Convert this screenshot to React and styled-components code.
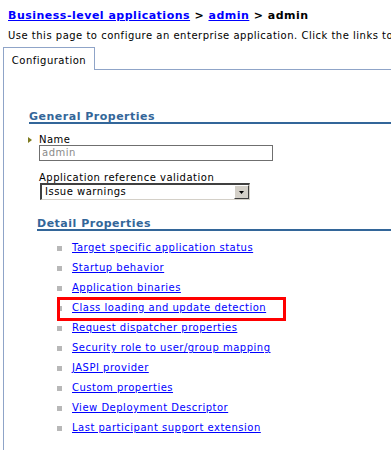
import React from "react";
import styled, { createGlobalStyle } from "styled-components";

const GlobalStyle = createGlobalStyle`
  html, body {
    margin: 0;
    padding: 0;
    background: #ffffff;
  }
  body {
    font-family: "DejaVu Sans", Verdana, sans-serif;
    font-size: 10px;
    letter-spacing: 0.5px;
    color: #000000;
    overflow: hidden;
  }
`;

const Page = styled.div`
  width: 391px;
  height: 450px;
  padding-top: 10px;
  box-sizing: border-box;
  overflow: hidden;
`;

const Breadcrumb = styled.div`
  padding-left: 8px;
  font-size: 11px;
  font-weight: bold;
  line-height: 12px;
  white-space: nowrap;
`;

const CrumbLink = styled.a`
  color: #0000ff;
  text-decoration: underline;
`;

const Description = styled.p`
  margin: 8px 0 0 8px;
  line-height: 12px;
  white-space: nowrap;
  overflow: hidden;
`;

const TabBar = styled.div`
  display: flex;
  margin: 5px 0 0 3px;
  height: 23px;
`;

const Tab = styled.div`
  width: 92px;
  border: 1px solid #8fa4c8;
  border-bottom: none;
  padding-top: 7px;
  box-sizing: border-box;
  text-align: center;
  line-height: 12px;
`;

const TabFiller = styled.div`
  flex: 1;
  border-bottom: 1px solid #8fa4c8;
`;

const Panel = styled.div`
  margin-left: 3px;
  border-left: 1px solid #8fa4c8;
  height: 400px;
  padding-top: 41px;
`;

const SectionTitle = styled.div`
  margin: ${(props) => props.top}px 0 0 ${(props) => props.indent}px;
  border-bottom: 2px solid #336699;
  color: #336699;
  font-size: 11px;
  font-weight: bold;
  line-height: 11px;
`;

const Field = styled.div`
  display: flex;
  flex-direction: column;
  align-items: flex-start;
  margin-left: 35px;
  margin-top: ${(props) => props.top}px;
`;

const Label = styled.label`
  position: relative;
  line-height: 11px;
`;

const Required = styled.svg`
  position: absolute;
  left: -11px;
  top: 3px;
`;

const TextBox = styled.div`
  width: 234px;
  height: 16px;
  border: 1px solid #6f6f6f;
  box-sizing: border-box;
  padding-left: 2px;
  color: #8a8a8a;
  line-height: 14px;
`;

const Select = styled.div`
  display: flex;
  align-items: stretch;
  margin-left: 1px;
  width: 210px;
  height: 17px;
  box-sizing: border-box;
  border-top: 2px solid #404040;
  border-left: 2px solid #404040;
  border-bottom: 1px solid #d4d0c8;
  border-right: 1px solid #d4d0c8;
  background: #ffffff;
`;

const SelectValue = styled.div`
  flex: 1;
  padding-left: 3px;
  line-height: 13px;
`;

const SelectButton = styled.div`
  width: 15px;
  display: flex;
  align-items: center;
  justify-content: center;
  background: #d4d0c8;
  border-top: 1px solid #ffffff;
  border-left: 1px solid #ffffff;
  border-right: 1px solid #404040;
  border-bottom: 1px solid #404040;
  box-sizing: border-box;
`;

const LinkList = styled.ul`
  list-style: none;
  margin: 7px 0 0 0;
  padding: 0 0 0 53px;
`;

const LinkItem = styled.li`
  position: relative;
  display: flex;
  align-items: center;
  height: 20px;

  &::after {
    content: "";
    display: ${(props) => (props.highlighted ? "block" : "none")};
    position: absolute;
    left: 0;
    top: -1px;
    width: 229px;
    height: 24px;
    border: 3px solid #ff0000;
    box-sizing: border-box;
  }
`;

const Bullet = styled.span`
  width: 5px;
  height: 5px;
  background: #b8b8b8;
  margin-right: 10px;
`;

const PropLink = styled.a`
  color: #0000ff;
  text-decoration: underline;
  line-height: 12px;
  white-space: nowrap;
`;

const detailLinks = [
  "Target specific application status",
  "Startup behavior",
  "Application binaries",
  "Class loading and update detection",
  "Request dispatcher properties",
  "Security role to user/group mapping",
  "JASPI provider",
  "Custom properties",
  "View Deployment Descriptor",
  "Last participant support extension",
];

export default function App() {
  return (
    <Page>
      <GlobalStyle />
      <Breadcrumb>
        <CrumbLink href="#">Business-level applications</CrumbLink> &gt;{" "}
        <CrumbLink href="#">admin</CrumbLink> &gt; admin
      </Breadcrumb>
      <Description>
        Use this page to configure an enterprise application. Click the links to
        access pages for further configuring the application.
      </Description>
      <TabBar>
        <Tab>Configuration</Tab>
        <TabFiller />
      </TabBar>
      <Panel>
        <SectionTitle indent={25} top={0}>
          General Properties
        </SectionTitle>
        <Field top={10}>
          <Label>
            <Required width="4" height="6" viewBox="0 0 4 6">
              <path d="M0 0 L4 3 L0 6 Z" fill="#7d7a1e" />
            </Required>
            Name
          </Label>
          <TextBox>admin</TextBox>
        </Field>
        <Field top={11}>
          <Label>Application reference validation</Label>
          <Select>
            <SelectValue>Issue warnings</SelectValue>
            <SelectButton>
              <svg width="5" height="3" viewBox="0 0 5 3">
                <path d="M0 0 H5 L2.5 3 Z" fill="#000000" />
              </svg>
            </SelectButton>
          </Select>
        </Field>
        <SectionTitle indent={33} top={18}>
          Detail Properties
        </SectionTitle>
        <LinkList>
          {detailLinks.map((text, i) => (
            <LinkItem key={text} highlighted={i === 3}>
              <Bullet />
              <PropLink href="#">{text}</PropLink>
            </LinkItem>
          ))}
        </LinkList>
      </Panel>
    </Page>
  );
}
